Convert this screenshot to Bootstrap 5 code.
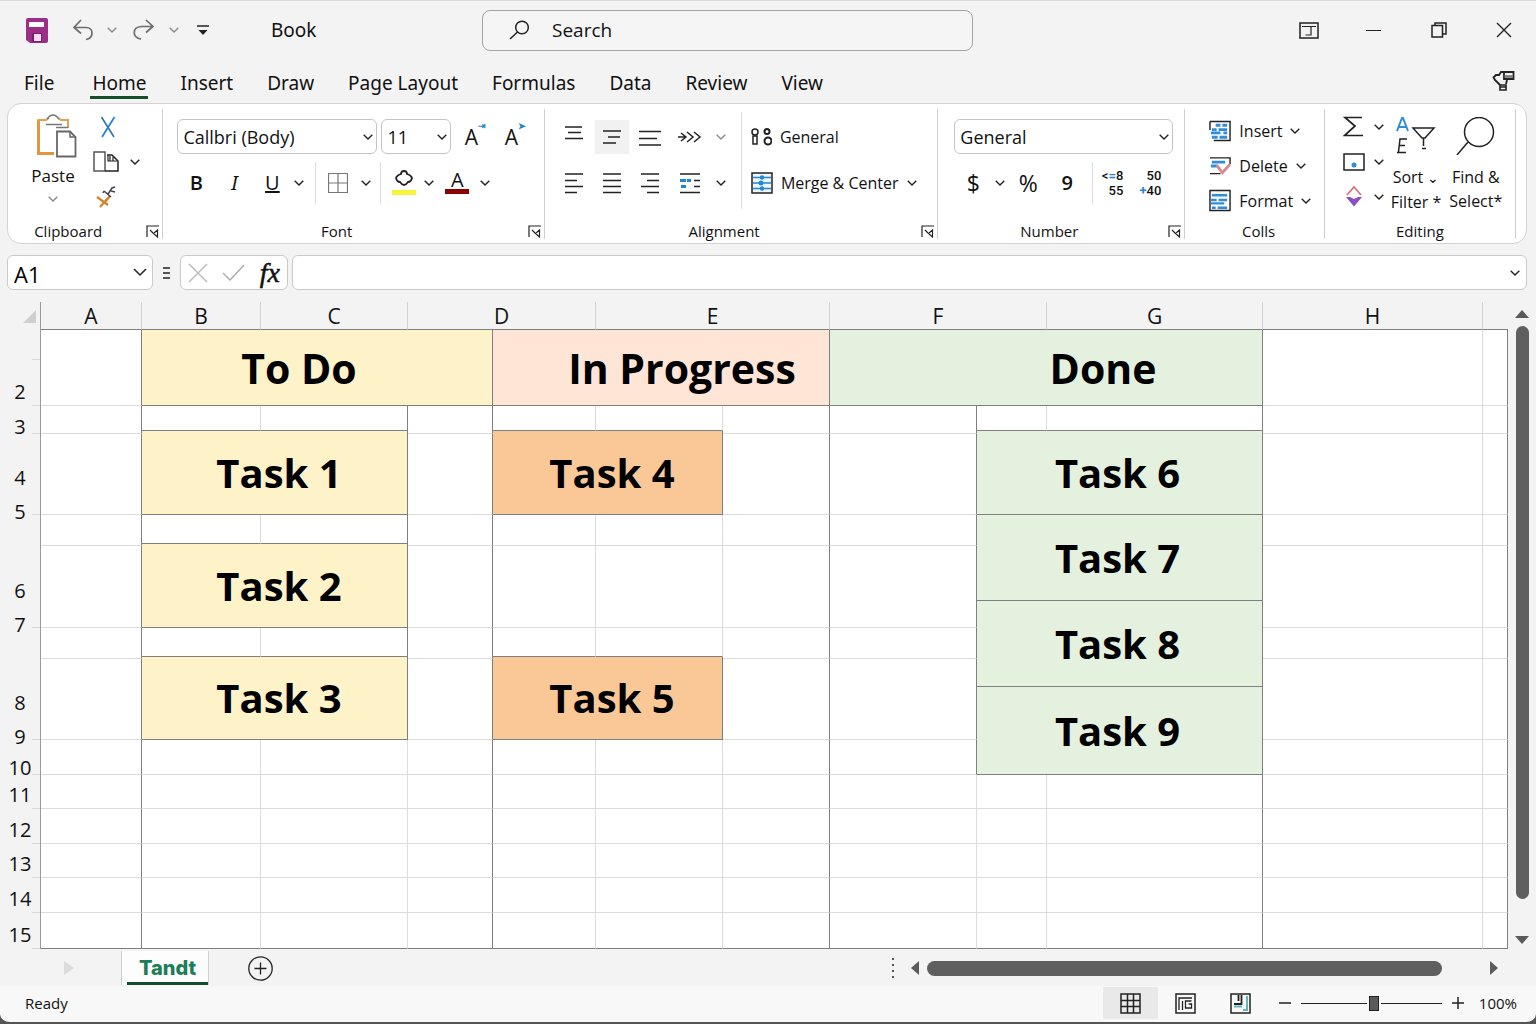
<!DOCTYPE html>
<html lang="en">
<head>
<meta charset="utf-8">
<meta name="viewport" content="width=device-width, initial-scale=1">
<title>Book</title>
<link href="https://cdn.jsdelivr.net/npm/bootstrap@5.3.0/dist/css/bootstrap.min.css" rel="stylesheet">
<style>
:root{--ui:"Open Sans","Noto Sans",sans-serif;--edge:#7f7f7f;--hair:#dcdcdc}
body{font-family:var(--ui);font-size:16px;line-height:20px;color:#111;background:#f3f3f3;display:flex;flex-direction:column;min-height:100vh;overflow-x:hidden}
svg{display:block;fill:none;stroke:#222;stroke-width:1.5;flex:none}
button{background:none;border:0;padding:0;color:inherit;display:flex;align-items:center;justify-content:center}
button:hover{background:#ececec}
.chev{width:10px;height:6px;stroke-width:1.4}
.chev-btn{width:16px;height:24px}
.pale{stroke:#8a8a8a}

/* title bar */
.title-bar{display:grid;grid-template-columns:482fr 491fr 563fr;height:60px;box-shadow:inset 0 1px #dcdcdc;align-items:center}
.quick{padding-left:20px}
.book-name{font-family:"Noto Sans",sans-serif;font-size:19px;margin-left:51px}
.search-box{height:41px;border:1px solid #a3a3a3;border-radius:8px;background:#f5f5f5;padding-left:26px;gap:20px;font-size:19px}
.search-box input{background:none;border:0;outline:0;min-width:0;color:#111;flex:1}
.search-box input::placeholder{color:#111;opacity:1}
.win-btn{width:65px;height:40px}

/* tabs */
.menu-row{height:43px;padding:10px 21px 0 22px}
.menu-tabs{gap:30px}
.menu-tabs a{font-family:"Noto Sans",sans-serif;font-size:19px;line-height:26px;padding:0 2px;color:#111;text-decoration:none;border-bottom:3px solid transparent;white-space:nowrap}
.menu-tabs a.active{border-color:#12502c}

/* ribbon */
.ribbon{margin:0 9px 0 7px;padding:5px 0 4px;background:#fff;border:1px solid #d2d2d2;border-radius:14px}
.r-group{flex:1 1 0;min-width:0;display:flex;flex-direction:column;border-right:1px solid #cfcfcf}
.g-clip{flex-grow:155}.g-font{flex-grow:382}.g-align{flex-grow:394}.g-num{flex-grow:247}.g-cells{flex-grow:139}.g-edit{flex-grow:191}.g-rest{flex-grow:10;border:0}
.r-body{height:112px}
.r-foot{display:grid;grid-template-columns:18px 1fr 18px;height:18px;font-size:15px;text-align:center;align-items:center}
.lean{padding-right:34px}
.slot{height:35px;display:flex;align-items:center}
.two-rows{padding-top:10px;display:flex;flex-direction:column;gap:11px}
.g-font .two-rows{padding-left:10px}
.big-btn{flex-direction:column;justify-content:flex-start;font-size:16px;line-height:24px}
.big-btn .gap-top{margin-top:10px}
.paste{width:64px;padding-top:5px;margin-left:13px;margin-right:4px}
.paste svg:first-child{margin-left:8px}
.paste span{margin-top:6px;font-size:17px}
.w24{width:24px}.w32{width:32px}.w34{width:34px}.w38{width:38px}.w40{width:40px}
.tool{height:34px}
.tool-on{background:#f1f1f1}
.pick{height:35px;border:1px solid #c4c4c4;border-radius:6px;background-color:#fff;font-size:18px;line-height:24px;color:#111;padding:0 24px 0 5px;background-position:right 3px center;background-size:10px 6px;
--bs-form-select-bg-img:url("data:image/svg+xml,%3csvg xmlns='http://www.w3.org/2000/svg' viewBox='0 0 10 6'%3e%3cpath fill='none' stroke='%23222' stroke-width='1.4' d='M.7.7 5 5 9.3.7'/%3e%3c/svg%3e")}
.pick-font{width:200px}.pick-size{width:70px;margin-left:4px}.pick-num{width:219px}
.vr-line{width:1px;height:42px;background:#dedede;margin:0 6px}
.vr-tall{width:1px;height:97px;background:#dedede;margin:3px 9px 0 12px}
.glyph{font-size:20px;line-height:24px}
.swatch{width:24px;height:5px}
.swatch-yellow{background:#f7f23c}.swatch-red{background:#8b0000}
.big-sign{font-size:23px}
.letter{font-size:20px;line-height:18px}
.slanted{font-family:"Noto Sans",sans-serif}
.case{font-size:21px}
.case sup{font-size:9px;color:#1a86c8;top:-11px;font-weight:700}
.stack-num{font:500 13px/15px Roboto,sans-serif;flex-direction:column;align-items:flex-end}
.blue{color:#1f86d4}

/* formula bar */
.formula-row{margin:11px 9px 12px 7px;height:35px}
.f-box{background:#fff;border:1px solid #c9c9c9;border-radius:6px;height:35px}
.name-box{width:146px;font-size:22px;padding-right:5px}
.name-box input{border:0;outline:0;background:none;width:100px;flex:1;padding:2px 0 0 6px}
.fx-box{width:108px}
.fx-mark{font:italic 400 28px/30px "Liberation Serif",serif;-webkit-text-stroke:.5px #111}
.entry{flex:1;margin-left:4px;padding-right:6px}
.entry input{border:0;outline:0;flex:1;min-width:0;background:none;padding-left:10px;font-size:18px}

/* sheet */
.sheet-area{flex:1 0 auto}
.sheet{width:100%;table-layout:fixed;border-collapse:separate;border-spacing:0}
.sheet th{font-weight:400;padding:0;color:#111}
.sheet thead th{height:28px;font-size:21px;line-height:24px;text-align:center;border-right:1px solid #d3d3d3;border-bottom:1px solid var(--edge);vertical-align:middle}
.sheet thead th:last-child{border-right:0}
.sheet thead th:first-child,.sheet tbody th{border-bottom:0;border-right:1px solid #9b9b9b}
.sheet tbody th{font-size:20px;line-height:22px;text-align:center;vertical-align:bottom;padding-bottom:3px;background:linear-gradient(#d8d8d8,#d8d8d8) right bottom/8px 1px no-repeat}
.sheet tbody th span{display:block}
.sheet tbody th.mid{vertical-align:middle;padding:7px 0 0}
.sheet tbody th.low{line-height:15px;padding:0}
.sheet tbody th.up{vertical-align:top;padding:0}
.sheet tbody th.up span{margin-top:-14px}
.sheet tbody th.bare{background:none}
.sheet td{background:#fff;padding:0;border-right:1px solid var(--hair);border-bottom:1px solid var(--hair);text-align:center;vertical-align:middle;white-space:nowrap}
.sheet td.r-edge{border-right-color:var(--edge)}
.sheet td.b-edge{border-bottom-color:var(--edge)}
.sheet td.cardcell{font-weight:700;font-size:40px;line-height:48px;color:#000}
.sheet td.headcell{font-size:41px}
.sheet td.todo{background:#fef3c8;padding-left:9px}
.sheet td.doing{background:#fac897;padding-left:9px}
.sheet td.done{background:#e5f1df;padding-right:4px}
.sheet td.h-todo{padding-right:36px;padding-left:0}
.sheet td.h-doing{background:#fee5d5;padding-left:42px}
.sheet td.h-done{padding-left:114px;padding-right:0}
.v-scroll{flex:0 0 28px;padding:8px 0 6px;gap:8px}
.thumb{background:#5f5f5f;border-radius:8px}
.v-scroll .thumb{width:13px;flex:0 1 573px}
.v-scroll svg,.sheet-bar .tri{fill:#5a5a5a;stroke:none}

/* sheet tabs and status */
.sheet-bar{height:36px;background:#f3f3f3}
.sheet-tab{margin-left:45px;width:88px;height:34px;background:#fdfdfd;border-left:1px solid #d0d0d0;border-right:1px solid #d0d0d0;padding-left:5px}
.sheet-tab a{flex:1;height:34px;border-bottom:3px solid #12502c;text-align:center;font:800 20px/34px "Inter","Open Sans",sans-serif;color:#1c7d59;text-decoration:none}
.add-sheet{margin-left:39px}
.h-scroll{width:607px;margin-right:38px}
.h-scroll .thumb{height:15px}
.status{height:38px;background:#f8f8f8;border-bottom:2px solid #555;border-radius:0 0 10px 10px;padding:0 19px 2px 25px;font-size:15px}
.frame-floor{background:#555}
.view-btn{width:55px;height:32px}
.view-on{background:#e9e9e9}
.zoom-range{appearance:none;width:141px;height:16px;background:linear-gradient(#222,#222) center/100% 1px no-repeat;margin:0 7px}
.zoom-range::-webkit-slider-thumb{appearance:none;width:10px;height:15px;background:#5a5a5a;border:1px solid #222;box-shadow:-2px 0 #f8f8f8,2px 0 #f8f8f8}
</style>
<script src="https://cdn.jsdelivr.net/npm/bootstrap@5.3.0/dist/js/bootstrap.bundle.min.js"></script>
</head>
<body>
<svg width="0" height="0" class="position-absolute" aria-hidden="true">
  <symbol id="chev" viewBox="0 0 10 6"><path d="M.7.7 5 5 9.3.7"/></symbol>
  <symbol id="launch" viewBox="0 0 14 13"><path d="M1 12V1h12M4 5l3 3M11.500 5 7.500 8.500l4 3.500z" stroke-width="1.200"/></symbol>
</svg>

<header>
  <div class="title-bar">
    <div class="quick d-flex align-items-center">
      <button aria-label="Save" class="w34 tool"><svg width="22" height="25" viewBox="0 0 22 25" stroke="none"><path d="M2 0h18q2 0 2 2v21q0 2-2 2H4l-4-3V2Q0 0 2 0z" fill="#9b2f87" stroke="none"/><path d="M3 4h15v5H3z" fill="#fff" stroke="none"/><path d="M6 15h10v9H6z" fill="#7d1f6b" stroke="none"/><path d="M8 16h7v7H8z" fill="#f6dcef" stroke="none"/></svg></button>
      <button aria-label="Undo" class="w38 tool ms-2 ps-1"><svg width="21" height="22" viewBox="0 0 21 22"><g stroke="#6e6e6e" stroke-width="1.700"><path d="M8 1 1 8.500l7 6M1 8.500h12c8 0 8 10.500 0 12"/></g></svg></button>
      <button aria-label="Undo options" class="w24 tool"><svg class="chev pale"><use href="#chev"/></svg></button>
      <button aria-label="Redo" class="w38 tool"><svg width="21" height="22" viewBox="0 0 21 22"><g stroke="#6e6e6e" stroke-width="1.700"><path d="m13 1 7 6.500-7 6M20 7.500H8C-1 8-1 18.500 8 20"/></g></svg></button>
      <button aria-label="Redo options" class="w24 tool"><svg class="chev pale"><use href="#chev"/></svg></button>
      <button aria-label="Customize toolbar" class="w34 tool"><svg width="12" height="11" viewBox="0 0 12 11"><path d="M0 1h12"/><path d="M1.500 5h9L6 10z" fill="#222" stroke="none"/></svg></button>
      <span class="book-name">Book</span>
    </div>
    <label class="search-box d-flex align-items-center">
      <svg width="21" height="20" viewBox="0 0 21 20"><circle cx="13" cy="7.500" r="6.300"/><path d="M8.500 12 1 19"/></svg>
      <input type="text" placeholder="Search" aria-label="Search">
    </label>
    <div class="d-flex justify-content-end">
      <button class="win-btn" aria-label="Ribbon display"><svg width="20" height="17" viewBox="0 0 20 17"><path d="M1 1h18v15H1z"/><path d="M3 4.500h14M12 4.500V13H6.500" stroke-width="1.200"/></svg></button>
      <button class="win-btn" aria-label="Minimize"><svg width="15" height="3" viewBox="0 0 15 3"><path d="M0 1.500h15" stroke-width="1"/></svg></button>
      <button class="win-btn" aria-label="Restore"><svg width="16" height="16" viewBox="0 0 16 16"><path d="M1 3.500h10.500V15H1z"/><path d="M4 3V1h11v11h-3" /></svg></button>
      <button class="win-btn" aria-label="Close"><svg width="16" height="16" viewBox="0 0 16 16"><path d="m1 1 14 14M15 1 1 15" stroke-width="1.400"/></svg></button>
    </div>
  </div>
  <div class="menu-row d-flex justify-content-between align-items-start">
    <nav class="menu-tabs d-flex">
      <a href="#" class="me-1">File</a><a href="#" class="active" aria-current="page">Home</a><a href="#">Insert</a><a href="#">Draw</a><a href="#">Page Layout</a><a href="#">Formulas</a><a href="#">Data</a><a href="#">Review</a><a href="#">View</a>
    </nav>
    <button aria-label="Share"><svg width="23" height="21" viewBox="0 0 23 21"><path d="M12 2H9L7 5H4L1.500 7.500 3 10l5 5M15 10l-1 4" stroke-width="1.800"/><path d="M12 2h9.500v7H12z" stroke-width="1.800"/><path d="M12.500 6.500H21" stroke="#777" stroke-width="2.500"/><path d="M8 15h6v5H8zM8 17h6" stroke-width="1.600"/></svg></button>
  </div>
</header>

<section class="ribbon d-flex" aria-label="Ribbon">
  <div class="r-group g-clip">
    <div class="r-body d-flex">
      <button class="paste big-btn">
        <svg width="40" height="44" viewBox="0 0 40 44"><path d="M1.500 5.500v34H17" stroke="#e3953f" stroke-width="3"/><path d="M1 6h8l3-2M21 4l3 2h7v8" stroke="#e3a04f" stroke-width="2"/><path d="M10 5q6-8 12 0M9 10.500h16M19 13.500h12" stroke="#777" stroke-width="1.600"/><path d="M20 17.500h13l5.500 5.500v19.500H20z" fill="#fff" stroke="#666" stroke-width="1.800"/><path d="M33 17.500V23h5.500" stroke="#666"/></svg>
        <span>Paste</span>
        <svg class="chev pale mt-2"><use href="#chev"/></svg>
      </button>
      <div>
        <div class="slot"><button aria-label="Cut" class="w38 tool"><svg width="16" height="22" viewBox="0 0 16 22"><path d="M1.500 1 14 21" stroke="#2b6f9c"/><path d="M14.500 1 2 21" stroke="#1f86d4" stroke-width="1.800"/></svg></button></div>
        <div class="slot"><button aria-label="Copy" class="w34 tool"><svg width="26" height="21" viewBox="0 0 26 21"><path d="M1 1h11v19H1z" stroke="#555"/><path d="M14 4h5l6 6v10H12" /><path d="M15 4v6h9M17 5v5M20 6v4" stroke-width="1.200"/></svg></button><button aria-label="Copy options" class="w24 tool"><svg class="chev"><use href="#chev"/></svg></button></div>
        <div class="slot"><button aria-label="Format painter" class="w34 tool"><svg width="20" height="22" viewBox="0 0 20 22"><path d="m1 11 11 8M12 12 4 21M9 16l5-6" stroke="#d3832b" stroke-width="2.200"/><path d="m8 5 7 6M12 8l4-6 3-1M15 5l4 1M8 5l-1 2" stroke="#4a3c50"/></svg></button></div>
      </div>
    </div>
    <div class="r-foot"><i></i><span class="lean">Clipboard</span><button aria-label="Clipboard settings"><svg width="14" height="13"><use href="#launch"/></svg></button></div>
  </div>

  <div class="r-group g-font">
    <div class="r-body two-rows">
      <div class="slot ps-1">
        <select class="form-select pick pick-font" aria-label="Font"><option>Callbri (Body)</option></select>
        <select class="form-select pick pick-size" aria-label="Font size"><option>11</option></select>
        <button aria-label="Increase font size" class="w40 tool case ms-1">A<sup>⇥</sup></button>
        <button aria-label="Decrease font size" class="w40 tool case">A<sup>➤</sup></button>
      </div>
      <div class="slot ps-1">
        <button aria-label="Bold" class="w38 tool glyph fw-semibold">B</button>
        <button aria-label="Italic" class="w38 tool glyph slanted"><em>I</em></button>
        <button aria-label="Underline" class="w38 tool glyph text-decoration-underline">U</button>
        <button aria-label="Underline options" class="chev-btn"><svg class="chev"><use href="#chev"/></svg></button>
        <i class="vr-line ms-2"></i>
        <button aria-label="Borders" class="w32 tool"><svg width="20" height="20" viewBox="0 0 20 20"><path d="M.5.5h19v19H.5zM10 0v20M0 10h20" stroke="#777" stroke-width="1.200"/></svg></button>
        <button aria-label="Border options" class="chev-btn ms-1"><svg class="chev"><use href="#chev"/></svg></button>
        <i class="vr-line"></i>
        <button aria-label="Fill colour" class="w34 tool flex-column"><svg width="18" height="16" viewBox="0 0 18 16"><path d="M9 1q3 0 3 3 4 1 5 4-1 4-4 4-2 3-4 3t-4-3q-3 0-4-4 1-3 5-4 0-3 3-3z" stroke-width="1.800"/></svg><i class="swatch swatch-yellow mt-1"></i></button>
        <button aria-label="Fill options" class="chev-btn"><svg class="chev"><use href="#chev"/></svg></button>
        <button aria-label="Font colour" class="w40 tool flex-column"><span class="letter">A</span><i class="swatch swatch-red"></i></button>
        <button aria-label="Font colour options" class="chev-btn"><svg class="chev"><use href="#chev"/></svg></button>
      </div>
    </div>
    <div class="r-foot"><i></i><span class="lean">Font</span><button aria-label="Font settings"><svg width="14" height="13"><use href="#launch"/></svg></button></div>
  </div>

  <div class="r-group g-align">
    <div class="r-body d-flex">
      <div class="two-rows ps-2">
        <div class="slot gap-1 ps-1">
          <button aria-label="Top align" class="w34 tool"><svg width="20" height="24" viewBox="0 0 20 24"><path d="M1 2h17M4 7.500h13M1 13.500h18"/></svg></button>
          <button aria-label="Middle align" class="w34 tool tool-on"><svg width="20" height="18" viewBox="0 0 20 18"><path d="M1 3h18M6 9h12M1 15h13"/></svg></button>
          <button aria-label="Bottom align" class="w34 tool"><svg width="24" height="18" viewBox="0 0 24 18"><path d="M1 3.500h22M1 10.500h18M1 17h22"/></svg></button>
          <button aria-label="Orientation" class="w38 tool"><svg width="24" height="12" viewBox="0 0 24 12"><path d="M0 6h8M3 2l5 4-5 4M9 1l6 5-6 5M16 1l6 5-6 5"/></svg></button>
          <button aria-label="Orientation options" class="chev-btn"><svg class="chev pale"><use href="#chev"/></svg></button>
        </div>
        <div class="slot gap-1 ps-1">
          <button aria-label="Align left" class="w34 tool"><svg width="20" height="22" viewBox="0 0 20 22"><path d="M1 2h18M1 8.500h12M1 14.500h18M1 20.500h12"/></svg></button>
          <button aria-label="Centre" class="w34 tool"><svg width="20" height="22" viewBox="0 0 20 22"><path d="M1 2h18M1 8.500h18M1 14.500h18M1 20.500h18"/></svg></button>
          <button aria-label="Align right" class="w34 tool"><svg width="20" height="22" viewBox="0 0 20 22"><path d="M1 2h18M7 8.500h12M1 14.500h18M7 20.500h12"/></svg></button>
          <button aria-label="Indent" class="w38 tool"><svg width="22" height="22" viewBox="0 0 22 22"><path d="M1 2h20M15 8.500h6M15 14.500h6M1 20.500h20"/><path d="M1 8.500h12M2 14.500h5" stroke="#1f86d4" stroke-width="3" stroke-dasharray="6 1 4 1"/></svg></button>
          <button aria-label="Indent options" class="chev-btn"><svg class="chev"><use href="#chev"/></svg></button>
        </div>
      </div>
      <i class="vr-tall"></i>
      <div class="two-rows">
        <div class="slot"><button class="gap-2"><svg width="21" height="18" viewBox="0 0 21 18"><circle cx="4" cy="4" r="3"/><path d="M2 8h4v8H2z"/><circle cx="16" cy="3.500" r="2.500" stroke-width="2"/><circle cx="17" cy="13" r="3.500" stroke-width="2"/></svg>General</button></div>
        <div class="slot"><button class="gap-2"><svg width="22" height="22" viewBox="0 0 22 22"><path d="M1 1h20v20H1z" fill="#eef6fc"/><path d="M2 5.500h18M2 11h18M2 16.500h18" stroke="#1f86d4"/><g fill="#1f86d4" stroke="none"><circle cx="11" cy="5.500" r="2.200"/><circle cx="10" cy="11" r="2.500"/><circle cx="11" cy="16.500" r="2.200"/></g></svg>Merge &amp; Center<svg class="chev"><use href="#chev"/></svg></button></div>
      </div>
    </div>
    <div class="r-foot"><i></i><span class="lean">Alignment</span><button aria-label="Alignment settings"><svg width="14" height="13"><use href="#launch"/></svg></button></div>
  </div>

  <div class="r-group g-num">
    <div class="r-body two-rows ps-3">
      <div class="slot"><select class="form-select pick pick-num" aria-label="Number format"><option>General</option></select></div>
      <div class="slot">
        <button aria-label="Currency" class="w38 tool big-sign">$</button>
        <button aria-label="Currency options" class="chev-btn"><svg class="chev"><use href="#chev"/></svg></button>
        <button aria-label="Percent" class="w40 tool big-sign">%</button>
        <button aria-label="Comma" class="w38 tool glyph fw-semibold">9</button>
        <i class="vr-line"></i>
        <button aria-label="Increase decimal" class="w24 tool stack-num"><span>&lt;<b class="blue">=</b>8</span><span>55</span></button>
        <button aria-label="Decrease decimal" class="w38 tool stack-num"><span>50</span><span><b class="blue">+</b>40</span></button>
      </div>
    </div>
    <div class="r-foot"><i></i><span class="pe-4">Number</span><button aria-label="Number settings"><svg width="14" height="13"><use href="#launch"/></svg></button></div>
  </div>

  <div class="r-group g-cells">
    <div class="r-body ps-4 pt-1">
      <div class="slot"><button class="gap-2"><svg width="22" height="22" viewBox="0 0 23 22"><path d="M5 1h17v20H5M1 1v9M1 1h5"/><path d="M7 5h5m2 0h5M3 9.500h5m2 0h9M2 13h10m3 0h4M3 17.500h6m2 0h8" stroke="#2f8ddb" stroke-width="3"/></svg>Insert<svg class="chev"><use href="#chev"/></svg></button></div>
      <div class="slot"><button class="gap-2"><svg width="22" height="22" viewBox="0 0 23 22"><path d="M1 2.500h21V9M1 19h11"/><path d="M3 7h14M2 11h7" stroke="#2f8ddb" stroke-width="3"/><path d="m8 10 6 8 8-9" stroke="#d98a90" stroke-width="3"/></svg>Delete<svg class="chev"><use href="#chev"/></svg></button></div>
      <div class="slot"><button class="gap-2"><svg width="22" height="24" viewBox="0 0 23 24"><path d="M1 22V1h21v21z"/><path d="M3 6h16M2 11h6m2 0h9M2 14.500h14M3 19h4m2 0h10" stroke="#2f8ddb" stroke-width="2.500"/></svg>Format<svg class="chev"><use href="#chev"/></svg></button></div>
    </div>
    <div class="r-foot"><i></i><span class="ps-2">Colls</span><i></i></div>
  </div>

  <div class="r-group g-edit">
    <div class="r-body d-flex ps-2">
      <div class="ps-1">
        <div class="slot"><button aria-label="Sum" class="w34 tool"><svg width="21" height="21" viewBox="0 0 21 21"><path d="M19 1.500H2L12 10 1.500 19.500H20" stroke-width="1.700"/></svg></button><button aria-label="Sum options" class="chev-btn"><svg class="chev"><use href="#chev"/></svg></button></div>
        <div class="slot"><button aria-label="Fill" class="w34 tool"><svg width="22" height="18" viewBox="0 0 22 18"><path d="M1 1h20v16H1z"/><circle cx="11" cy="12" r="2.500" fill="#2f8ddb" stroke="none"/></svg></button><button aria-label="Fill options" class="chev-btn"><svg class="chev"><use href="#chev"/></svg></button></div>
        <div class="slot"><button aria-label="Clear" class="w34 tool"><svg width="18" height="21" viewBox="0 0 18 21"><path d="m2 9 7-8 7 8" stroke="#d9727f" stroke-width="1.800"/><path d="M1 11h4l4 2 4-2h4l-8 9.500z" fill="#8a4fc0" stroke="none"/></svg></button><button aria-label="Clear options" class="chev-btn"><svg class="chev"><use href="#chev"/></svg></button></div>
      </div>
      <button class="big-btn pt-2 ms-1"><svg width="40" height="38" viewBox="0 0 40 38"><path d="m1 14 5-13h1l5 13M3 10h7" stroke="#2f8ddb" stroke-width="2"/><path d="M11 22H4L2.500 35M3.500 28.500H9M1 35.500h9"/><path d="M17 11h21l-9 10h-3zM27.500 21v8M26 31.500h4"/></svg><span class="gap-top">Sort <small>⌄</small></span><span>Filter *</span></button>
      <button class="big-btn ms-2 pt-2"><svg width="40" height="38" viewBox="0 0 40 38"><circle cx="23" cy="15" r="14.500"/><path d="M12 25 1 38"/></svg><span class="gap-top">Find &amp;</span><span>Select*</span></button>
    </div>
    <div class="r-foot"><i></i><span>Editing</span><i></i></div>
  </div>
  <div class="r-group g-rest"></div>
</section>

<div class="formula-row d-flex align-items-center">
  <div class="f-box name-box d-flex align-items-center"><input type="text" value="A1" aria-label="Name box"><button aria-label="Names"><svg width="14" height="9" viewBox="0 0 14 9"><path d="m1 1 6 6 6-6"/></svg></button></div>
  <svg class="mx-2" width="11" height="14" viewBox="0 0 11 14"><path d="M2 2h7M2 7h7M2 12h7"/></svg>
  <div class="f-box fx-box d-flex align-items-center justify-content-around">
    <button aria-label="Cancel"><svg width="20" height="20" viewBox="0 0 20 20"><path d="m1 1 18 18M19 1 1 19" stroke="#bdbdbd"/></svg></button>
    <button aria-label="Enter"><svg width="23" height="17" viewBox="0 0 23 17"><path d="m1 9 7 7L22 1" stroke="#adadad"/></svg></button>
    <button aria-label="Insert function" class="fx-mark">fx</button>
  </div>
  <div class="f-box entry d-flex align-items-center"><input type="text" aria-label="Formula"><button aria-label="Expand formula bar"><svg class="chev"><use href="#chev"/></svg></button></div>
</div>

<main class="sheet-area d-flex">
  <div class="flex-grow-1"><table class="sheet" id="sheet"></table></div>
  <div class="v-scroll d-flex flex-column align-items-center" aria-hidden="true">
    <svg width="14" height="8" viewBox="0 0 14 8"><path d="M0 8 7 0l7 8z"/></svg>
    <div class="thumb"></div>
    <svg class="mt-auto" width="14" height="8" viewBox="0 0 14 8"><path d="M0 0h14L7 8z"/></svg>
  </div>
</main>

<footer class="frame-floor">
  <div class="sheet-bar d-flex align-items-center">
    <svg class="ms-5 ps-3" width="28" height="14" viewBox="0 0 12 14"><path d="M0 0v14l10-7z" fill="#dadada" stroke="none"/></svg>
    <div class="sheet-tab d-flex"><a href="#">Tandt</a></div>
    <button class="add-sheet" aria-label="New sheet"><svg width="25" height="25" viewBox="0 0 25 25"><circle cx="12.500" cy="12.500" r="11.700" stroke-width="1.300"/><path d="M12.500 6.500v12M6.500 12.500h12" stroke-width="1.300"/></svg></button>
    <div class="ms-auto h-scroll d-flex align-items-center" aria-hidden="true">
      <svg width="4" height="20" viewBox="0 0 4 20" class="me-3"><path d="M2 0v20" stroke="#555" stroke-width="2" stroke-dasharray="2 4"/></svg>
      <svg class="tri me-2" width="8" height="14" viewBox="0 0 8 14"><path d="M8 0v14L0 7z"/></svg>
      <div class="thumb flex-grow-1"></div>
      <svg class="tri ms-5" width="8" height="14" viewBox="0 0 8 14"><path d="M0 0v14l8-7z"/></svg>
    </div>
  </div>
  <div class="status d-flex align-items-center">
    <span class="me-auto">Ready</span>
    <button aria-label="Normal view" class="view-btn view-on"><svg width="21" height="21" viewBox="0 0 21 21"><path d="M1 1h19v19H1zM7.500 1v19M13.500 1v19M1 7.500h19M1 13.500h19"/></svg></button>
    <button aria-label="Page layout view" class="view-btn"><svg width="21" height="21" viewBox="0 0 21 21"><path d="M1 1h19v19H1z"/><path d="M4 17V5h13M7.500 17V8M16.500 8h-6v7h6v-4h-3" stroke-width="1.300"/></svg></button>
    <button aria-label="Page break view" class="view-btn"><svg width="21" height="21" viewBox="0 0 21 21"><path d="M1 1h19v19H1z"/><path d="M11.500 2v9H4M8.500 2v6" stroke-width="1.800"/><path d="M17 3v14h-4M4 13.500h8" stroke="#5fb8b8" stroke-width="2"/></svg></button>
    <button aria-label="Zoom out" class="ms-2"><svg width="18" height="14" viewBox="0 0 18 14"><path d="M3 7h12"/></svg></button>
    <input type="range" class="zoom-range" min="0" max="200" value="104" aria-label="Zoom">
    <button aria-label="Zoom in"><svg width="18" height="14" viewBox="0 0 18 14"><path d="M3 7h12M9 1v12"/></svg></button>
    <span class="ms-2 ps-1">100%</span>
  </div>
</footer>

<script>
// Column and row edges of the sheet, measured from its top left corner below the header.
const colEdges = [0,41,142,261,408,493,596,723,830,977,1047,1263,1483,1508];
const rowLines = [0,76,104,185,216,298,329,410,445,479,514,548,583,619];
const corner = '<svg class="ms-auto me-1" width="13" height="13" viewBox="0 0 13 13"><path d="M13 0v13H0z" fill="#cfcfcf" stroke="none"/></svg>';
// Column headings: label and number of columns it covers.
const headings = [[corner,1],['A',1],['B',1],['C',1],['D',2],['E',2],['F',2],['G',1],['H',1],['',1]];
// Row numbers: label, top, bottom, class.
const rowHeads = [['',0,30,''],['2',30,76,''],['3',76,104,'low'],['4',104,185,'mid'],['5',185,216,'up bare'],['6',216,298,'mid'],['7',298,329,'up bare'],
  ['8',329,410,'mid'],['9',410,427,'up bare'],['10',427,445,'low'],['11',445,479,''],['12',479,514,''],['13',514,548,''],['14',548,583,''],['15',583,619,'']];
// Merged cells: text, first column, last column, top, bottom, class.
const merged = [
  ['To Do',2,4,0,76,'headcell todo h-todo'],['In Progress',5,7,0,76,'headcell h-doing'],['Done',8,10,0,76,'headcell done h-done'],
  ['Task 1',2,3,101,185,'todo'],['Task 2',2,3,214,298,'todo'],['Task 3',2,3,327,410,'todo'],
  ['Task 4',5,6,101,185,'doing'],['Task 5',5,6,327,410,'doing'],
  ['Task 6',9,10,101,185,'done'],['Task 7',9,10,185,271,'done'],['Task 8',9,10,271,357,'done'],['Task 9',9,10,357,445,'done']];
const strongRight = [1,4,7,10,12], cells = [];
for (const [t,a,b,c] of rowHeads) cells.push({tag:'th',t:`<span>${t}</span>`,c0:0,c1:0,a,b,k:c});
for (const [t,c0,c1,a,b,k] of merged) cells.push({tag:'td',t,c0,c1,a,b,k:'cardcell r-edge b-edge '+k});
for (let c = 1; c < 13; c++) {
  const own = merged.filter(m => c >= m[1] && c <= m[2]);
  const cuts = [...new Set([...rowLines.filter(y => !own.some(m => y > m[3] && y < m[4])), ...own.flatMap(m => [m[3],m[4]])])].sort((p,q) => p-q);
  for (let i = 0; i < cuts.length-1; i++) {
    const a = cuts[i], b = cuts[i+1];
    if (own.some(m => a >= m[3] && b <= m[4])) continue;
    const right = strongRight.includes(c) || (c === 3 && b <= 410) || (c === 8 && b <= 445);
    const bottom = b === 619 || own.some(m => m[3] === b);
    cells.push({tag:'td',t:'',c0:c,c1:c,a,b,k:(right?'r-edge ':'')+(bottom?'b-edge':'')});
  }
}
const ys = [...new Set(cells.flatMap(c => [c.a,c.b]))].sort((p,q) => p-q);
let html = '<colgroup>' + colEdges.slice(1).map((x,i) => `<col style="width:${x-colEdges[i]}px">`).join('') + '</colgroup><thead><tr>';
html += headings.map(([t,n]) => `<th scope="col" colspan="${n}">${t}</th>`).join('') + '</tr></thead><tbody>';
ys.slice(0,-1).forEach((y,i) => {
  html += `<tr style="height:${ys[i+1]-y}px">` + cells.filter(c => c.a === y).sort((p,q) => p.c0-q.c0).map(c =>
    `<${c.tag} class="${c.k}" colspan="${c.c1-c.c0+1}" rowspan="${ys.indexOf(c.b)-i}">${c.t}</${c.tag}>`).join('') + '</tr>';
});
document.getElementById('sheet').innerHTML = html + '</tbody>';
</script>
</body>
</html>
